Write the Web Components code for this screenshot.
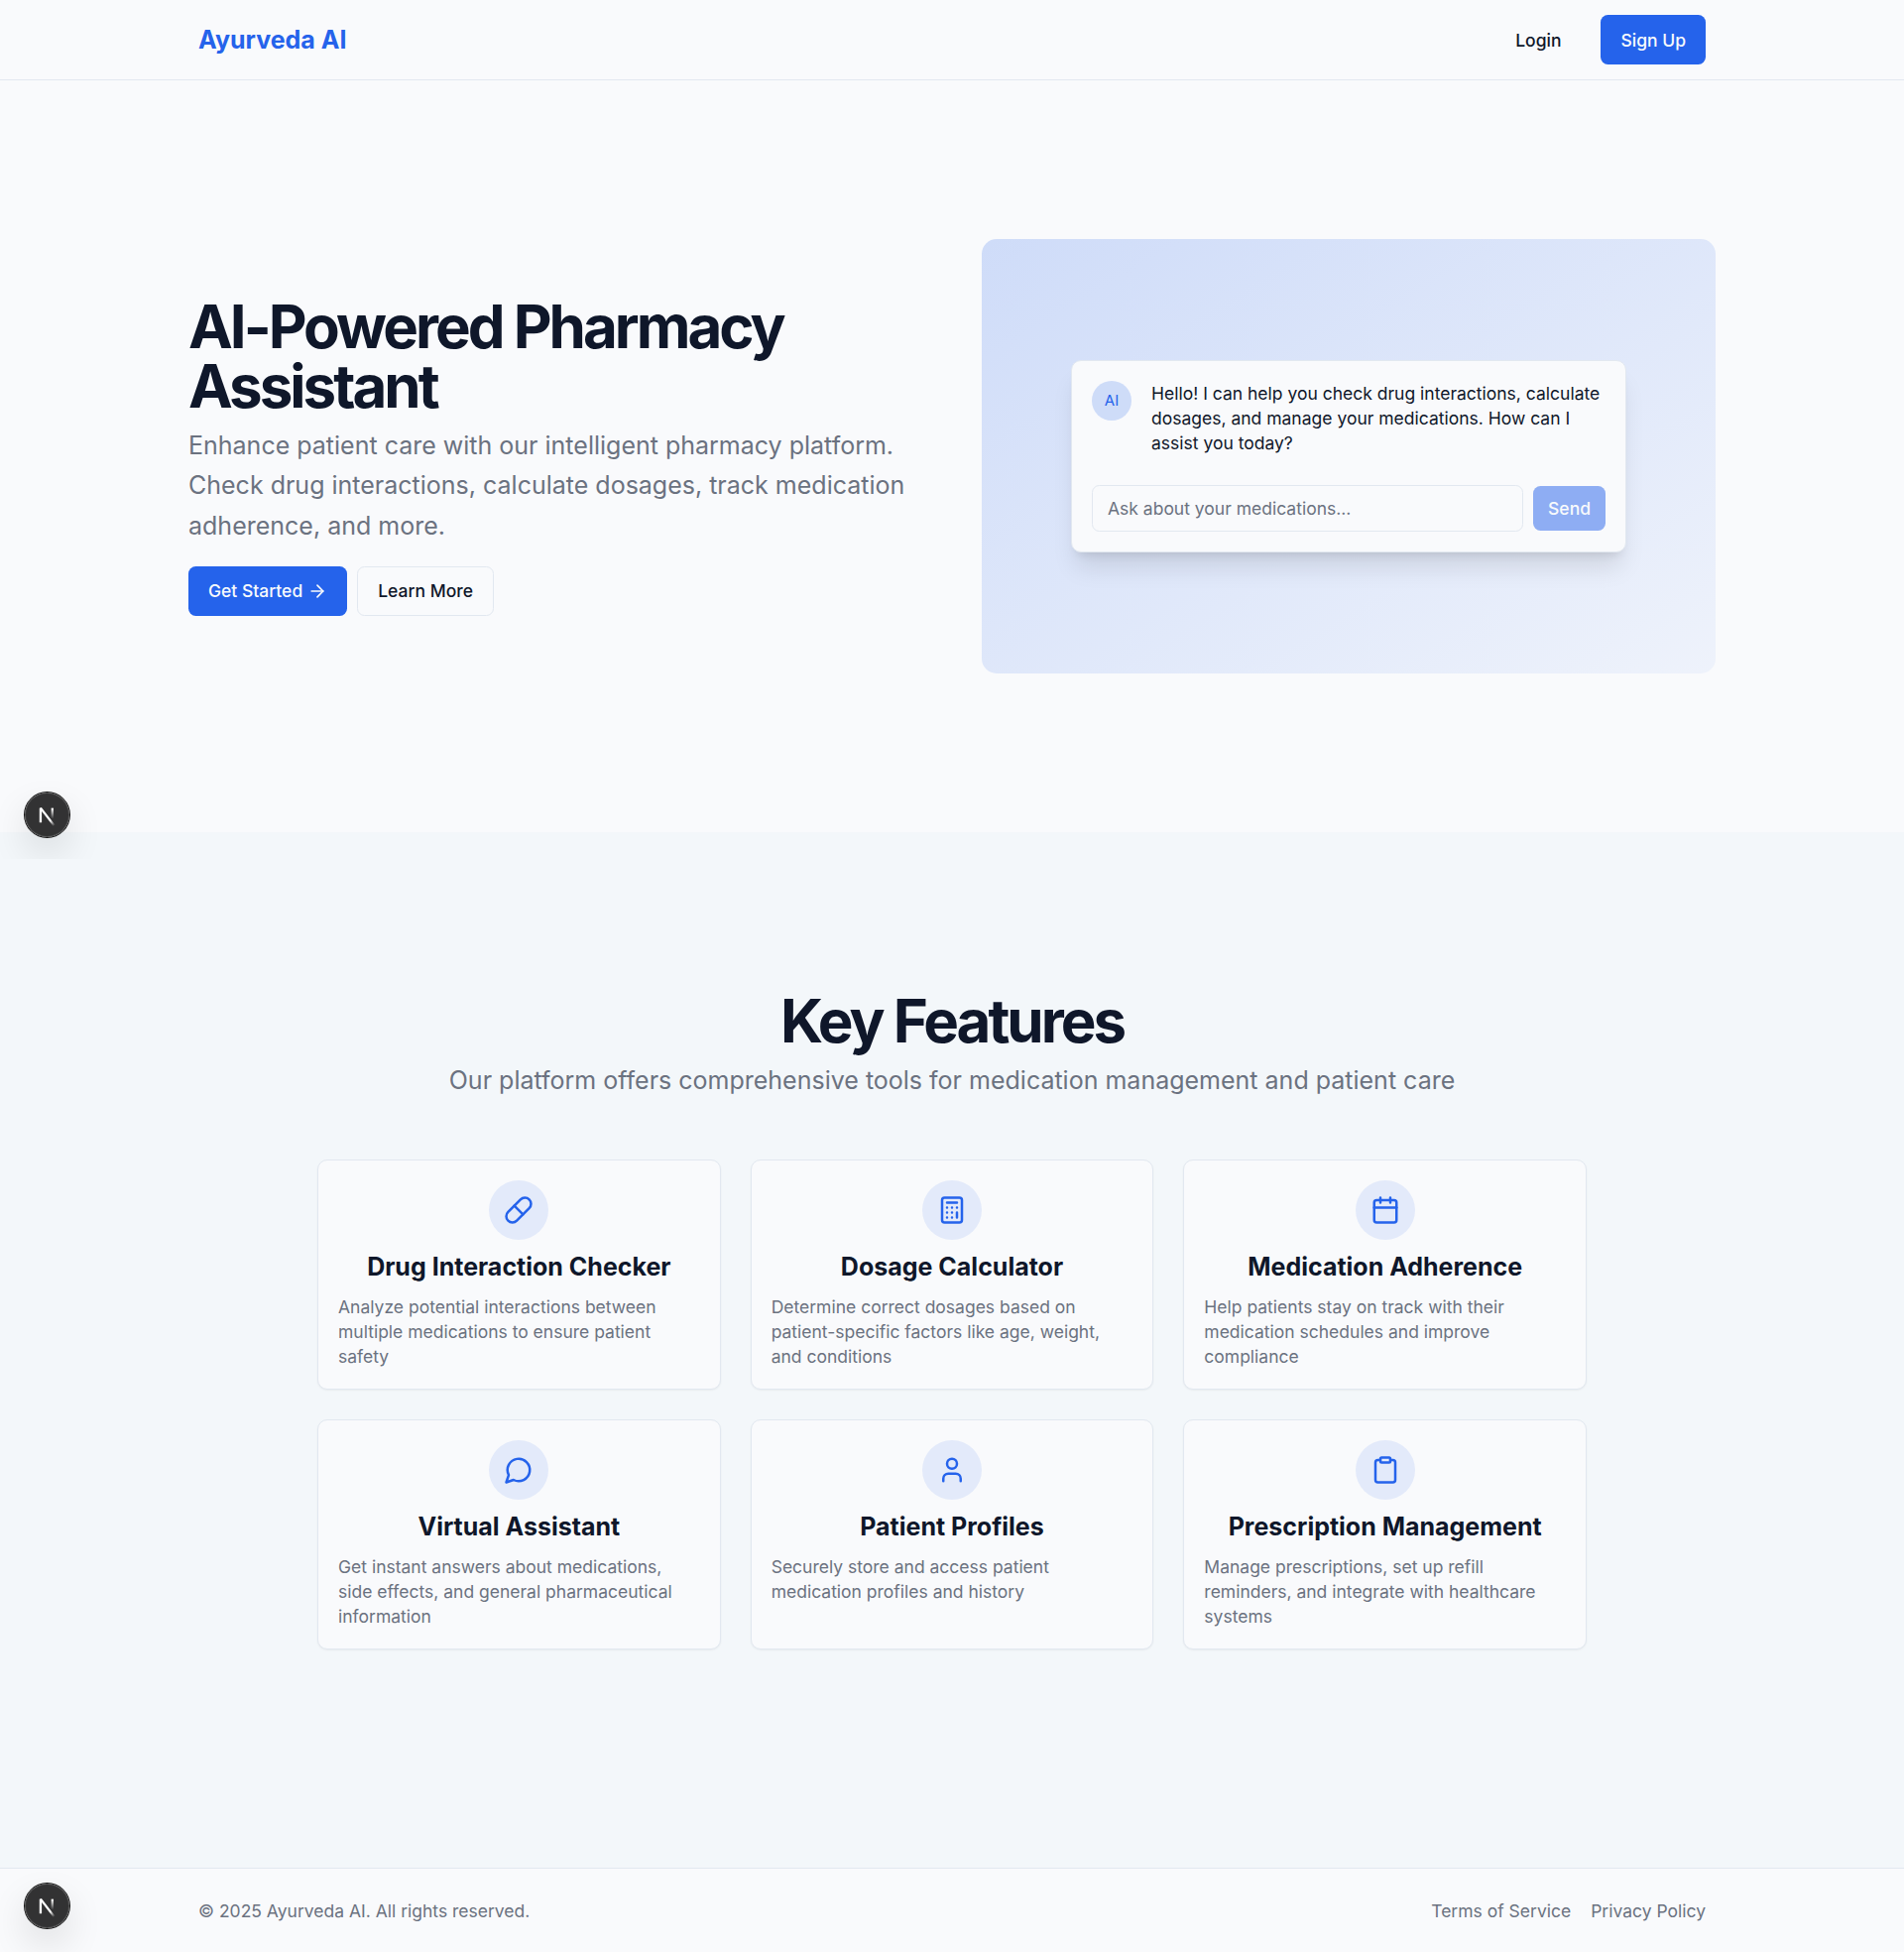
<!DOCTYPE html>
<html lang="en">
<head>
<meta charset="utf-8">
<title>Ayurveda AI</title>
<style>
  :root {
    font-size: 20px;
    --background: #f9fafc;
    --section: #f3f7fa;
    --foreground: #0f172a;
    --muted: #6b7280;
    --border: #e2e8f0;
    --primary: #2563eb;
    --primary-rgb: 37, 99, 235;
  }
  html, body { height: 1968px; overflow: hidden; }
  body {
    margin: 0;
    position: relative;
    background: var(--background);
    color: var(--foreground);
    font-family: Inter, "Liberation Sans", sans-serif;
    font-size: 1rem;
    line-height: 1.5;
  }
</style>
</head>
<body>
<ay-page></ay-page>

<script>
const define = (name, markup) => {
  const template = document.createElement('template');
  template.innerHTML = markup;
  customElements.define(name, class extends HTMLElement {
    constructor() {
      super();
      this.attachShadow({ mode: 'open' }).append(template.content.cloneNode(true));
    }
  });
};

const ICONS = {
  pill: '<path d="m10.5 20.5 10-10a4.95 4.95 0 1 0-7-7l-10 10a4.95 4.95 0 1 0 7 7Z"/><path d="m8.5 8.5 7 7"/>',
  calculator: '<rect width="16" height="20" x="4" y="2" rx="2"/><path d="M8 6h8M16 14v4M16 10h.01M12 10h.01M8 10h.01M12 14h.01M8 14h.01M12 18h.01M8 18h.01"/>',
  calendar: '<path d="M8 2v4M16 2v4"/><rect width="18" height="18" x="3" y="4" rx="2"/><path d="M3 10h18"/>',
  message: '<path d="M7.9 20A9 9 0 1 0 4 16.1L2 22Z"/>',
  user: '<path d="M19 21v-2a4 4 0 0 0-4-4H9a4 4 0 0 0-4 4v2"/><circle cx="12" cy="7" r="4"/>',
  clipboard: '<rect width="8" height="4" x="8" y="2" rx="1" ry="1"/><path d="M16 4h2a2 2 0 0 1 2 2v14a2 2 0 0 1-2 2H6a2 2 0 0 1-2-2V6a2 2 0 0 1 2-2h2"/>',
  arrow: '<path d="M5 12h14"/><path d="m12 5 7 7-7 7"/>'
};

customElements.define('ay-icon', class extends HTMLElement {
  constructor() {
    super();
    this.attachShadow({ mode: 'open' });
  }
  connectedCallback() {
    this.shadowRoot.innerHTML = `
      <style>
        :host { display: block; width: var(--icon-size, 1.5rem); height: var(--icon-size, 1.5rem); flex: none; }
        svg { display: block; width: 100%; height: 100%; }
      </style>
      <svg viewBox="0 0 24 24" fill="none" stroke="currentColor" stroke-width="2" stroke-linecap="round" stroke-linejoin="round">${ICONS[this.getAttribute('name')]}</svg>`;
  }
});

define('ay-button', `
  <style>
    :host {
      display: inline-flex; align-items: center; box-sizing: border-box;
      height: 50px; padding: 0 20px; border-radius: 7.5px;
      font-size: 17.5px; line-height: 25px; font-weight: 500; white-space: nowrap;
      color: var(--foreground);
    }
    :host([variant="primary"]) { background: var(--primary); color: #f8fafc; }
    :host([variant="outline"]) { border: 1px solid var(--border); }
    :host([size="sm"]) { height: 45px; padding: 0 15px; }
    :host([disabled]) { opacity: .5; }
  </style>
  <slot></slot>`);

define('ay-header', `
  <style>
    :host { display: block; border-bottom: 1px solid var(--border); background: var(--background); }
    .bar { display: flex; align-items: center; justify-content: space-between; box-sizing: border-box;
      height: 80px; max-width: 1600px; margin: 0 auto; padding: 0 40px; }
    .brand { font-size: 25px; line-height: 35px; font-weight: 700; color: var(--primary); }
    nav { display: flex; align-items: center; gap: 20px; }
  </style>
  <div class="bar">
    <span class="brand">Ayurveda AI</span>
    <nav><ay-button>Login</ay-button><ay-button variant="primary">Sign Up</ay-button></nav>
  </div>`);

define('ay-chat', `
  <style>
    :host { display: flex; flex-direction: column; gap: 30px; box-sizing: border-box; width: 560px; padding: 20px;
      border: 1px solid var(--border); border-radius: 10px; background: var(--background);
      box-shadow: 0 20px 25px -5px rgba(0,0,0,.1), 0 8px 10px -6px rgba(0,0,0,.1); }
    .message { display: flex; align-items: flex-start; gap: 20px; }
    .avatar { display: flex; align-items: center; justify-content: center; flex: none; width: 40px; height: 40px;
      border-radius: 50%; background: rgba(var(--primary-rgb), .2); color: var(--primary);
      font-size: 15px; line-height: 20px; }
    p { margin: 0; font-size: 17.5px; line-height: 25px; }
    .compose { display: flex; align-items: center; gap: 10px; }
    .field { display: flex; align-items: center; flex: 1; box-sizing: border-box; height: 47px; padding: 0 15px;
      border: 1px solid var(--border); border-radius: 7.5px; font-size: 17.5px; line-height: 25px; color: var(--muted); }
  </style>
  <div class="message">
    <div class="avatar">AI</div>
    <p>Hello! I can help you check drug interactions, calculate dosages, and manage your medications. How can I assist you today?</p>
  </div>
  <div class="compose">
    <div class="field">Ask about your medications...</div>
    <ay-button variant="primary" size="sm" disabled>Send</ay-button>
  </div>`);

define('ay-hero', `
  <style>
    :host { display: block; padding: 160px 0; }
    .grid { display: grid; grid-template-columns: 1fr 1fr; gap: 60px; align-items: center;
      box-sizing: border-box; max-width: 1600px; margin: 0 auto; padding: 0 30px; }
    .copy { display: flex; flex-direction: column; gap: 20px; }
    .lead { display: flex; flex-direction: column; gap: 10px; }
    h1 { margin: 0; font-size: 60px; line-height: 1; font-weight: 700; letter-spacing: -.05em; }
    p { margin: 0; font-size: 25px; line-height: 1.625; color: var(--muted); }
    .actions { display: flex; gap: 10px; }
    ay-icon { --icon-size: 20px; margin-left: 5px; }
    .stage { display: flex; align-items: center; justify-content: center; height: 437.5px; border-radius: 15px;
      background: linear-gradient(to bottom right, rgba(var(--primary-rgb), .2), rgba(var(--primary-rgb), .05)); }
  </style>
  <div class="grid">
    <div class="copy">
      <div class="lead">
        <h1>AI-Powered Pharmacy Assistant</h1>
        <p>Enhance patient care with our intelligent pharmacy platform. Check drug interactions, calculate dosages, track medication adherence, and more.</p>
      </div>
      <div class="actions">
        <ay-button variant="primary">Get Started<ay-icon name="arrow"></ay-icon></ay-button>
        <ay-button variant="outline">Learn More</ay-button>
      </div>
    </div>
    <div class="stage"><ay-chat></ay-chat></div>
  </div>`);

define('ay-feature', `
  <style>
    :host { display: flex; flex-direction: column; align-items: center; gap: 10px; box-sizing: border-box; padding: 20px;
      border: 1px solid var(--border); border-radius: 10px; background: var(--background);
      box-shadow: 0 1px 2px 0 rgba(0,0,0,.05); }
    .badge { display: flex; align-items: center; justify-content: center; width: 60px; height: 60px;
      border-radius: 50%; background: rgba(var(--primary-rgb), .1); color: var(--primary); }
    h3 { margin: 0; font-size: 25px; line-height: 35px; font-weight: 700; }
    p { margin: 0; align-self: stretch; font-size: 17.5px; line-height: 25px; color: var(--muted); }
  </style>
  <div class="badge"><slot name="icon"></slot></div>
  <h3><slot name="title"></slot></h3>
  <p><slot></slot></p>`);

const FEATURES = [
  ['pill', 'Drug Interaction Checker', 'Analyze potential interactions between multiple medications to ensure patient safety'],
  ['calculator', 'Dosage Calculator', 'Determine correct dosages based on patient-specific factors like age, weight, and conditions'],
  ['calendar', 'Medication Adherence', 'Help patients stay on track with their medication schedules and improve compliance'],
  ['message', 'Virtual Assistant', 'Get instant answers about medications, side effects, and general pharmaceutical information'],
  ['user', 'Patient Profiles', 'Securely store and access patient medication profiles and history'],
  ['clipboard', 'Prescription Management', 'Manage prescriptions, set up refill reminders, and integrate with healthcare systems']
];

define('ay-features', `
  <style>
    :host { display: block; padding: 160px 0; background: var(--section); }
    .intro { display: flex; flex-direction: column; align-items: center; gap: 10px; text-align: center; }
    h2 { margin: 0; font-size: 60px; line-height: 1; font-weight: 700; letter-spacing: -.05em; }
    .intro p { margin: 0; font-size: 25px; line-height: 1.625; color: var(--muted); }
    .grid { display: grid; grid-template-columns: repeat(3, 1fr); gap: 30px; max-width: 1280px; margin: 0 auto; padding: 60px 0; }
  </style>
  <div class="intro">
    <h2>Key Features</h2>
    <p>Our platform offers comprehensive tools for medication management and patient care</p>
  </div>
  <div class="grid">
    ${FEATURES.map(([icon, title, text]) => `<ay-feature><ay-icon slot="icon" name="${icon}"></ay-icon><span slot="title">${title}</span>${text}</ay-feature>`).join('')}
  </div>`);

define('ay-footer', `
  <style>
    :host { display: block; border-top: 1px solid var(--border); background: var(--background);
      font-size: 17.5px; line-height: 25px; color: var(--muted); }
    .bar { display: flex; align-items: center; justify-content: space-between; box-sizing: border-box;
      max-width: 1600px; margin: 0 auto; padding: 30px 40px; }
    nav { display: flex; gap: 20px; }
  </style>
  <div class="bar">
    <span>© 2025 Ayurveda AI. All rights reserved.</span>
    <nav><span>Terms of Service</span><span>Privacy Policy</span></nav>
  </div>`);

/* Floating developer badge; its layer ends at the bottom edge, which trims the shadow. */
define('ay-dev-badge', `
  <style>
    :host { display: block; position: absolute; left: 0; width: 130px; height: 120px; overflow: hidden; pointer-events: none; }
    .disc { position: absolute; left: 25px; bottom: 24px; width: 45px; height: 45px; border-radius: 50%;
      background: rgba(0,0,0,.8);
      box-shadow: 0 0 0 1px #171717, inset 0 0 0 1px rgba(255,255,255,.14), 0 16px 40px -5px rgba(0,0,0,.2); }
    :host([trim]) .disc { bottom: 22px; }
    svg { display: block; width: 45px; height: 45px; }
  </style>
  <div class="disc">
    <svg viewBox="0 0 45 45" fill="none">
      <defs>
        <linearGradient id="a" x1="9.955" y1="11.152" x2="15.48" y2="18.267" gradientUnits="userSpaceOnUse">
          <stop stop-color="#fff"/><stop offset=".604" stop-color="#fff" stop-opacity="0"/><stop offset="1" stop-color="#fff" stop-opacity="0"/>
        </linearGradient>
        <linearGradient id="b" x1="11.822" y1="1.4" x2="11.793" y2="9.625" gradientUnits="userSpaceOnUse">
          <stop stop-color="#fff"/><stop offset="1" stop-color="#fff" stop-opacity="0"/>
        </linearGradient>
      </defs>
      <g transform="translate(13 14.4) scale(1.25)" stroke-width="1.86">
        <path d="M13.3 15.2 2.34 1V12.6" stroke="url(#a)" stroke-linejoin="bevel"/>
        <path d="M11.825 1V13.1" stroke="url(#b)"/>
      </g>
    </svg>
  </div>`);

define('ay-page', `
  <style>
    :host { display: block; }
    .first { top: 746px; }
    .second { top: 1848px; }
  </style>
  <ay-header></ay-header>
  <main><ay-hero></ay-hero><ay-features></ay-features></main>
  <ay-footer></ay-footer>
  <ay-dev-badge class="first" trim></ay-dev-badge>
  <ay-dev-badge class="second"></ay-dev-badge>`);
</script>
</body>
</html>
